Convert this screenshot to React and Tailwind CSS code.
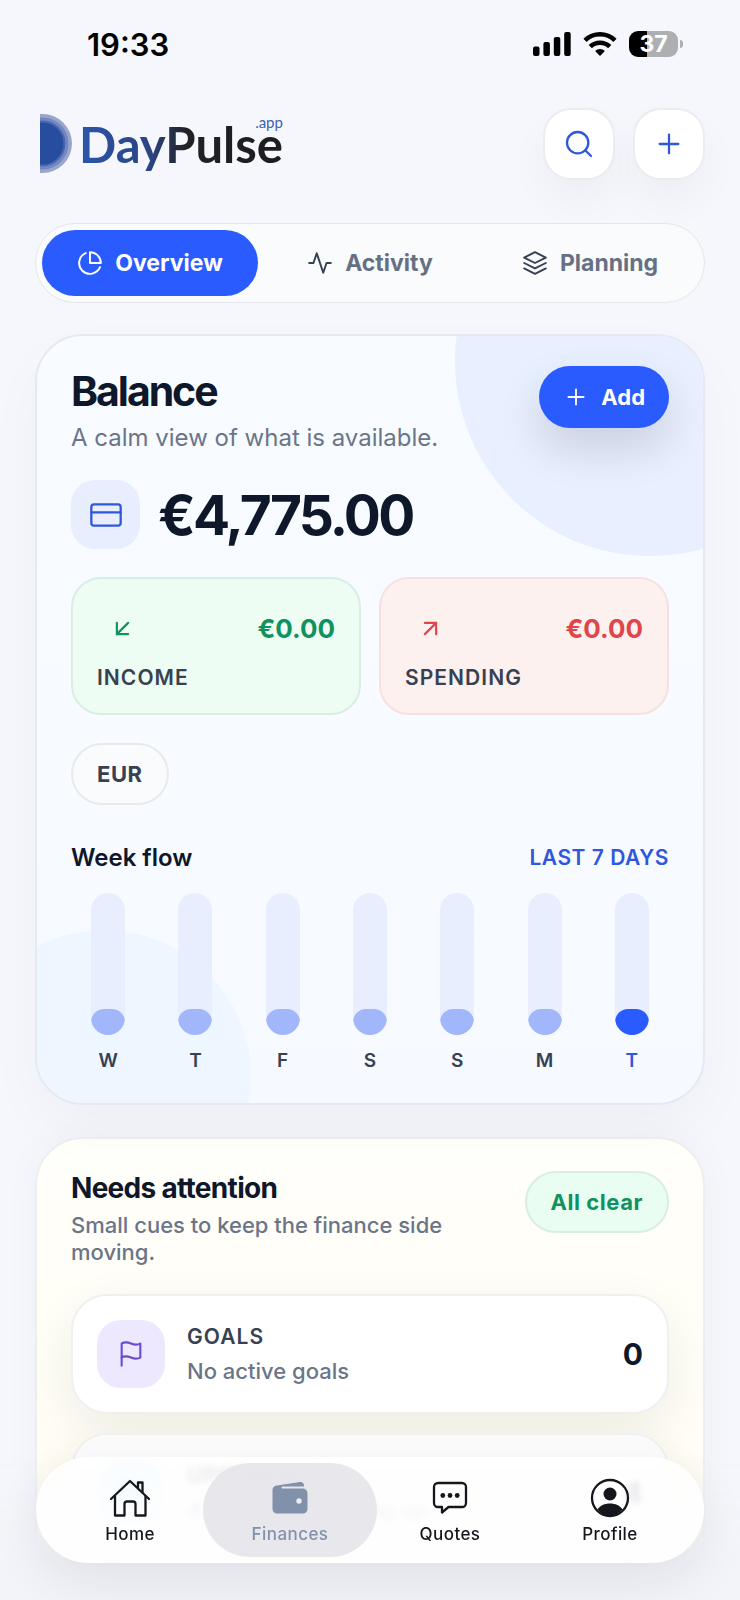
import React from "react";
import {
  FiActivity,
  FiArrowDownLeft,
  FiArrowUpRight,
  FiCalendar,
  FiCreditCard,
  FiFlag,
  FiLayers,
  FiPieChart,
  FiPlus,
  FiSearch,
} from "react-icons/fi";

const tabs = [
  { label: "Overview", icon: FiPieChart, active: true },
  { label: "Activity", icon: FiActivity },
  { label: "Planning", icon: FiLayers },
];

const week = [
  { day: "W", value: 18 },
  { day: "T", value: 18 },
  { day: "F", value: 18 },
  { day: "S", value: 18 },
  { day: "S", value: 18 },
  { day: "M", value: 18 },
  { day: "T", value: 18, today: true },
];

const StatusBar = () => (
  <div className="flex h-[88px] items-center justify-between pl-[52px] pr-[22px]">
    <span className="text-[31px] leading-none font-semibold text-black">19:33</span>
    <div className="flex items-center gap-3">
      <svg width="38" height="24" viewBox="0 0 38 24" fill="#000">
        <rect x="0" y="14.5" width="6.500" height="9.500" rx="2" />
        <rect x="10.400" y="10" width="6.500" height="14" rx="2" />
        <rect x="20.800" y="5" width="6.500" height="19" rx="2" />
        <rect x="31.200" y="0" width="6.500" height="24" rx="2" />
      </svg>
      <svg width="34" height="24" viewBox="0 0 34 24" fill="none" stroke="#000" strokeWidth="4.600">
        <path d="M2 8.400a21.500 21.500 0 0 1 30 0" />
        <path d="M7.300 14.700a14 14 0 0 1 19.400 0" />
        <path d="M17 24l-4.900-4.900a7 7 0 0 1 9.800 0z" fill="#000" stroke="none" />
      </svg>
      <div className="flex items-center gap-[2px]">
        <div className="flex h-[26px] w-[49px] items-center justify-center rounded-[9px] bg-[linear-gradient(to_right,#000_37%,#aeafb3_37%)] text-[23px] leading-none font-bold text-white">
          37
        </div>
        <div className="h-2 w-[3px] rounded-r-full bg-[#aeafb3]" />
      </div>
    </div>
  </div>
);

const Logo = () => (
  <a href="#home" className="relative ml-[5px] flex items-center gap-[7px]">
    <svg width="32" height="60" viewBox="0 0 32 60">
      <circle cx="2.500" cy="29.500" r="29.500" fill="#98a6cd" />
      <circle cx="2.500" cy="29.500" r="26" fill="#7288bf" />
      <circle cx="2.500" cy="29.500" r="23" fill="#4a68ae" />
      <circle cx="2.500" cy="29.500" r="21" fill="#274d9f" />
    </svg>
    <span className="bg-[linear-gradient(to_right,#2b55ab_0%,#2c4482_35%,#222226_52%,#1c1c1f_100%)] bg-clip-text font-[Lato] text-[49px] leading-[60px] font-bold text-transparent">
      DayPulse
    </span>
    <span className="absolute top-0 right-0 font-[Lato] text-[15px] leading-4 text-[#3d62b0]">
      .app
    </span>
  </a>
);

const SquareButton = ({ label, icon: Icon }) => (
  <button
    type="button"
    aria-label={label}
    className="flex size-[72px] items-center justify-center rounded-[28px] border-2 border-[#ebecef] bg-white text-[#2f57dc] shadow-[0_20px_44px_rgba(15,23,42,0.04)]"
  >
    <Icon size={32} strokeWidth={1.7} />
  </button>
);

const Tabs = () => (
  <div className="mt-[43px] grid grid-cols-3 gap-1 rounded-full border border-[#e4e6eb] bg-[#fafbfc] p-[6px]">
    {tabs.map(({ label, icon: Icon, active }) => (
      <button
        key={label}
        type="button"
        className={
          active
            ? "flex h-[66px] items-center justify-center gap-3 rounded-full bg-[#295bff] text-[23px] font-bold text-white"
            : "flex h-[66px] items-center justify-center gap-3 rounded-full text-[23px] font-bold text-[#667085]"
        }
      >
        <Icon size={26} strokeWidth={1.8} className={active ? "text-white" : "text-[#374151]"} />
        {label}
      </button>
    ))}
  </div>
);

const FlowBox = ({ label, amount, icon: Icon, box, color }) => (
  <div className={`rounded-[30px] border-2 p-6 ${box}`}>
    <div className={`flex items-center justify-between ${color}`}>
      <span className="flex size-[50px] items-center justify-center">
        <Icon size={27} strokeWidth={1.9} />
      </span>
      <span className="text-[26px] font-bold">{amount}</span>
    </div>
    <p className="mt-[14px] text-[21px] leading-[22px] font-semibold tracking-wider text-[#374151]">
      {label}
    </p>
  </div>
);

const BalanceCard = () => (
  <section className="relative mt-[31px] overflow-hidden rounded-[48px] border-2 border-[#e5e9f1] bg-[linear-gradient(#f8fbff,#f7fbff_85%,#f6f9ff)] px-[34px] py-[30px] shadow-[0_24px_60px_rgba(15,23,42,0.03)]">
    <div className="absolute -top-[170px] -right-[142px] size-[390px] rounded-full bg-[#e8effe]" />
    <div className="absolute -bottom-[121px] -left-[80px] size-[294px] rounded-full bg-[#eef6ff]" />

    <div className="relative">
      <div className="flex items-start justify-between">
        <div>
          <h1 className="text-[41px] leading-[51px] font-bold tracking-tighter text-[#0f172a]">
            Balance
          </h1>
          <p className="mt-[7px] text-[24px] leading-7 text-[#6b7588]">
            A calm view of what is available.
          </p>
        </div>
        <button
          type="button"
          className="flex h-[62px] items-center gap-3 rounded-full bg-[#295bff] px-6 text-[22px] font-bold text-white shadow-[0_20px_44px_rgba(15,23,42,0.14)]"
        >
          <FiPlus size={26} strokeWidth={1.7} />
          Add
        </button>
      </div>

      <div className="mt-7 flex items-center gap-[18px]">
        <span className="flex size-[69px] items-center justify-center rounded-[24px] bg-[#e8eefe] text-[#2f57dc]">
          <FiCreditCard size={32} strokeWidth={1.7} />
        </span>
        <span className="text-[55px] leading-[60px] font-bold tracking-tighter text-[#0f172a]">
          €4,775.00
        </span>
      </div>

      <div className="mt-7 grid grid-cols-2 gap-[18px]">
        <FlowBox
          label="INCOME"
          amount="€0.00"
          icon={FiArrowDownLeft}
          box="border-[#d9eee3] bg-[#eefdf4]"
          color="text-[#10925f]"
        />
        <FlowBox
          label="SPENDING"
          amount="€0.00"
          icon={FiArrowUpRight}
          box="border-[#f8dfe2] bg-[#fdf1f0]"
          color="text-[#df4549]"
        />
      </div>

      <button
        type="button"
        className="mt-7 flex h-[62px] items-center rounded-full border-2 border-[#e8eaee] bg-[#fafbfc] px-6 text-[22px] font-bold tracking-wide text-[#374151]"
      >
        EUR
      </button>

      <div className="mt-[38px] flex items-center justify-between leading-[30px]">
        <h2 className="text-[24px] font-semibold text-[#0f172a]">Week flow</h2>
        <span className="text-[21px] font-semibold tracking-wide text-[#2f57dc]">
          LAST 7 DAYS
        </span>
      </div>

      <div className="mt-5 grid grid-cols-7 gap-[13px]">
        {week.map(({ day, value, today }, i) => (
          <div key={i} className="flex flex-col items-center">
            <div className="flex h-[142px] w-[34px] items-end overflow-hidden rounded-full bg-[#e8eefe]">
              <div
                className={today ? "w-full rounded-full bg-[#295bff]" : "w-full rounded-full bg-[#a1b6fb]"}
                style={{ height: `${value}%` }}
              />
            </div>
            <span
              className={
                today
                  ? "mt-[14px] text-[19px] leading-6 font-semibold text-[#2f57dc]"
                  : "mt-[14px] text-[19px] leading-6 font-semibold text-[#374151]"
              }
            >
              {day}
            </span>
          </div>
        ))}
      </div>
    </div>
  </section>
);

const AttentionRow = ({ label, text, count, icon: Icon, row, tile }) => (
  <div
    className={`flex items-center gap-[22px] rounded-[36px] border-2 border-[#f0f0ef] p-6 shadow-[0_16px_50px_rgba(15,23,42,0.07)] ${row}`}
  >
    <span className={`flex size-[68px] items-center justify-center rounded-[24px] ${tile}`}>
      <Icon size={28} strokeWidth={1.8} />
    </span>
    <div className="flex-1">
      <p className="text-[21px] leading-[30px] font-semibold tracking-wider text-[#374151]">
        {label}
      </p>
      <p className="mt-1 text-[22px] leading-[30px] font-medium text-[#6b7588]">{text}</p>
    </div>
    <span className="text-[30px] font-bold text-[#0f172a]">{count}</span>
  </div>
);

const AttentionCard = () => (
  <section className="mt-8 rounded-[48px] border-2 border-[#eeeeee] bg-[linear-gradient(#fffffb,#fffdf1)] px-[34px] py-8 shadow-[0_-4px_40px_rgba(15,23,42,0.03)]">
    <div className="flex items-start justify-between gap-6">
      <div>
        <h2 className="text-[28px] leading-[34px] font-bold tracking-tight text-[#0f172a]">
          Needs attention
        </h2>
        <p className="mt-[7px] text-[22px] leading-[27px] font-medium text-[#6b7588]">
          Small cues to keep the finance side moving.
        </p>
      </div>
      <span className="flex h-[62px] shrink-0 items-center rounded-full border-2 border-[#d9eee3] bg-[#e9fdf3] px-6 text-[22px] font-bold tracking-wide text-[#10925f]">
        All clear
      </span>
    </div>

    <div className="mt-7 flex flex-col gap-[19px]">
      <AttentionRow
        label="GOALS"
        text="No active goals"
        count="0"
        icon={FiFlag}
        row="bg-white"
        tile="bg-[#eee8fe] text-[#6b4bd0]"
      />
      <AttentionRow
        label="UPCOMING"
        text="4 payments coming up"
        count="4"
        icon={FiCalendar}
        row="bg-[#fafbfa]"
        tile="bg-[#d8edff] text-[#2f94ea]"
      />
    </div>
  </section>
);

const HomeIcon = () => (
  <svg width="42" height="40" viewBox="0 0 42 40" fill="none" stroke="currentColor" strokeWidth="2.300" strokeLinecap="round" strokeLinejoin="round">
    <path d="M2 21L21 3l19 18" />
    <path d="M6 18v19.500h9.500V26a2.500 2.500 0 0 1 2.500-2.500h6a2.500 2.500 0 0 1 2.500 2.500v11.500H36.500V18" />
    <path d="M29 9.500V4.500h4.500V14" />
  </svg>
);

const WalletIcon = () => (
  <svg width="36" height="40" viewBox="0 0 36 40" fill="currentColor">
    <path d="M5 7.500L28 4a3.500 3.500 0 0 1 4 3.500V8.600H10.500a1 1 0 0 0 0 2H31a4.500 4.500 0 0 1 4.500 4.500V31A4.500 4.500 0 0 1 31 35.500H5A4.500 4.500 0 0 1 .500 31V12A4.500 4.500 0 0 1 5 7.500z" />
    <circle cx="27" cy="23" r="2.700" fill="#eceef1" />
  </svg>
);

const QuotesIcon = () => (
  <svg width="36" height="40" viewBox="0 0 36 40" fill="none" stroke="currentColor" strokeWidth="2.300" strokeLinejoin="round">
    <path d="M6 5h24a4 4 0 0 1 4 4v16a4 4 0 0 1-4 4H16.500L10 34.500V29H6a4 4 0 0 1-4-4V9a4 4 0 0 1 4-4z" />
    <g fill="currentColor" stroke="none">
      <circle cx="10.800" cy="17.500" r="2.400" />
      <circle cx="18" cy="17.500" r="2.400" />
      <circle cx="25.200" cy="17.500" r="2.400" />
    </g>
  </svg>
);

const ProfileIcon = () => (
  <svg width="40" height="40" viewBox="0 0 40 40">
    <circle cx="20" cy="20" r="18" fill="none" stroke="currentColor" strokeWidth="2.300" />
    <circle cx="20" cy="16" r="6.500" fill="currentColor" />
    <path d="M7.500 31.500C10 27.500 14.500 25.500 20 25.500s10 2 12.500 6A18 18 0 0 1 20 38 18 18 0 0 1 7.500 31.500z" fill="currentColor" />
  </svg>
);

const navItems = [
  { label: "Home", icon: HomeIcon },
  { label: "Finances", icon: WalletIcon, active: true },
  { label: "Quotes", icon: QuotesIcon },
  { label: "Profile", icon: ProfileIcon },
];

const BottomNav = () => (
  <div className="fixed inset-x-0 bottom-0 bg-[linear-gradient(to_top,#f3f4f9_30%,transparent)] px-9 pb-[37px]">
    <nav className="grid grid-cols-4 rounded-full bg-white/85 px-[14px] py-[6px] shadow-[0_20px_50px_rgba(15,23,42,0.08)] backdrop-blur-[3px]">
      {navItems.map(({ label, icon: Icon, active }) => (
        <a
          key={label}
          href={`#${label.toLowerCase()}`}
          className={
            active
              ? "-mx-[7px] flex h-[94px] flex-col items-center justify-center gap-1 rounded-full bg-[#e5e6ea]/90 pt-1 text-[17px] leading-6 font-medium tracking-wide text-[#8190ab]"
              : "-mx-[7px] flex h-[94px] flex-col items-center justify-center gap-1 rounded-full pt-1 text-[17px] leading-6 font-medium tracking-wide text-[#15171c]"
          }
        >
          <Icon />
          {label}
        </a>
      ))}
    </nav>
  </div>
);

export default function App() {
  return (
    <div className="min-h-screen bg-[#f5f7fc] px-[35px] pb-3 font-[Inter,sans-serif]">
      <StatusBar />
      <header className="flex items-center justify-between pt-5">
        <Logo />
        <div className="flex gap-[18px]">
          <SquareButton label="Search" icon={FiSearch} />
          <SquareButton label="New entry" icon={FiPlus} />
        </div>
      </header>
      <main>
        <Tabs />
        <BalanceCard />
        <AttentionCard />
      </main>
      <BottomNav />
    </div>
  );
}
